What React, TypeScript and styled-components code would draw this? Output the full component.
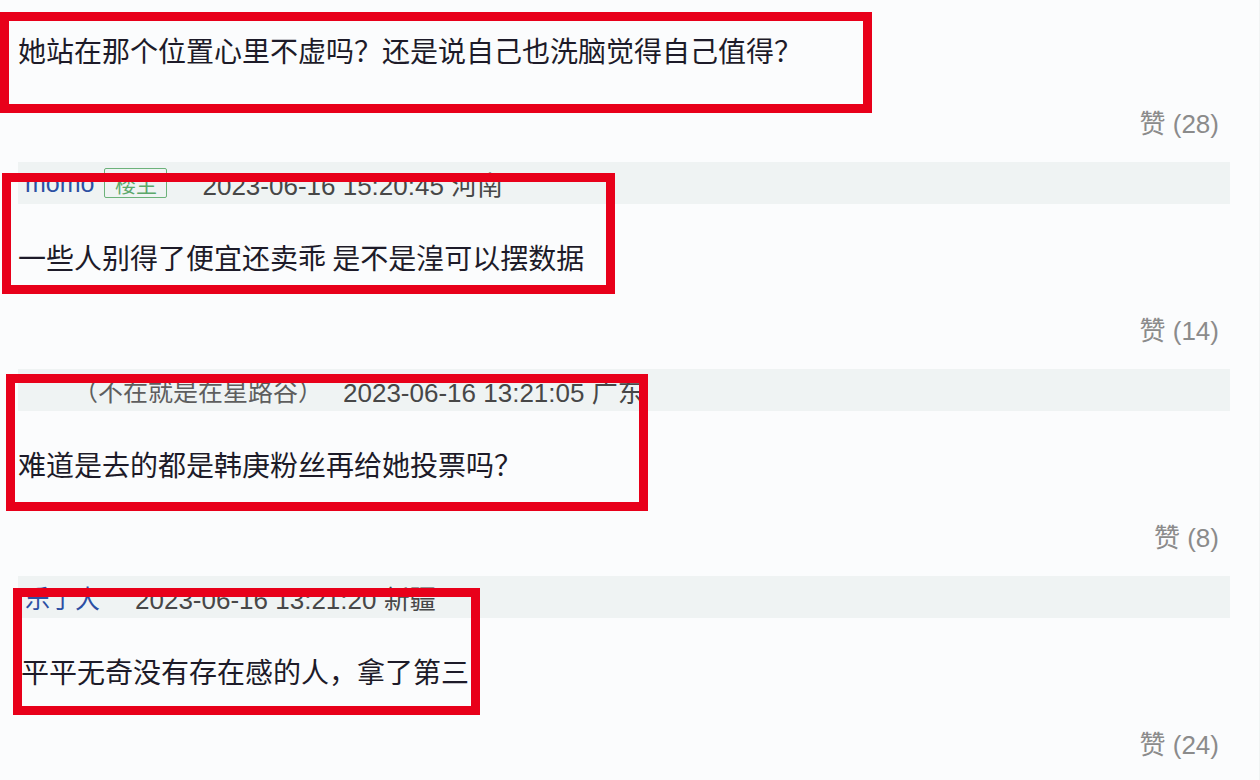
import React from 'react';
import styled, { createGlobalStyle } from 'styled-components';

type BoxRect = {
    top: number;
    left: number;
    width: number;
    height: number;
}

type CommentItem = {
    name?: string;
    host?: boolean;
    note?: string;
    time?: string;
    place?: string;
    text: string;
    likes: number;
    indent?: number;
    box: BoxRect;
}

const GlobalStyle = createGlobalStyle`
    html, body {
        margin: 0;
        padding: 0;
        background: #fbfcfd;
    }
    body {
        font-family: "Liberation Sans", "Noto Sans CJK SC", sans-serif;
        overflow: hidden;
    }
`

const Page = styled.div`
    width: 1260px;
    height: 780px;
    overflow: hidden;
    background: #fbfcfd;
    border-right: 1px solid #f1f4f4;
    box-sizing: border-box;
`

const CommentBlock = styled.div`
    position: relative;
    display: flex;
    flex-direction: column;
    margin-bottom: 23px;
`

const HeaderBar = styled.div`
    display: flex;
    align-items: center;
    height: 42px;
    margin: 0 29px 0 18px;
    padding-left: 7px;
    background-color: #eff3f3;
    font-size: 25px;
    white-space: nowrap;
`

const UserName = styled.span`
    color: #2c4fa3;
`

const HostBadge = styled.span`
    display: inline-flex;
    align-items: center;
    justify-content: center;
    width: 63px;
    height: 30px;
    margin-left: 10px;
    box-sizing: border-box;
    border: 1px solid #6cb27a;
    border-radius: 2px;
    color: #5ba86a;
    font-size: 21px;
`

const UserNote = styled.span<{ $indent: number }>`
    margin-left: ${({ $indent }) => $indent}px;
    color: #5e5e5e;
`

const MetaText = styled.span<{ $gap: number }>`
    margin-left: ${({ $gap }) => $gap}px;
    font-size: 26px;
    color: #474747;
`

const BodyText = styled.div<{ $first: boolean; $indent: number }>`
    padding: ${({ $first }) => ($first ? '35px' : '38px')} 0 0 ${({ $indent }) => $indent}px;
    font-size: 28px;
    line-height: 30px;
    color: #1d1b29;
    font-family: "Noto Sans CJK SC", "Liberation Sans", sans-serif;
    white-space: nowrap;
`

const LikeRow = styled.div`
    display: flex;
    justify-content: flex-end;
    margin-top: 44px;
    padding-right: 40px;
    font-size: 26px;
    line-height: 30px;
    color: #8b8b8b;
`

const HighlightBox = styled.div<{ $rect: BoxRect }>`
    position: absolute;
    top: ${({ $rect }) => $rect.top}px;
    left: ${({ $rect }) => $rect.left}px;
    width: ${({ $rect }) => $rect.width}px;
    height: ${({ $rect }) => $rect.height}px;
    box-sizing: border-box;
    border: 9px solid #e8001a;
    pointer-events: none;
`

const comments: CommentItem[] = [
    {
        text: '她站在那个位置心里不虚吗？还是说自己也洗脑觉得自己值得？',
        likes: 28,
        box: { top: 12, left: 0, width: 872, height: 101 },
    },
    {
        name: 'momo',
        host: true,
        time: '2023-06-16 15:20:45',
        place: '河南',
        text: '一些人别得了便宜还卖乖 是不是湟可以摆数据',
        likes: 14,
        box: { top: 11, left: 2, width: 613, height: 121 },
    },
    {
        note: '（不在就是在星路谷）',
        time: '2023-06-16 13:21:05',
        place: '广东',
        text: '难道是去的都是韩庚粉丝再给她投票吗？',
        likes: 8,
        box: { top: 5, left: 6, width: 642, height: 137 },
    },
    {
        name: '乐了大',
        time: '2023-06-16 13:21:20',
        place: '新疆',
        text: '平平无奇没有存在感的人，拿了第三',
        likes: 24,
        indent: 21,
        box: { top: 12, left: 13, width: 467, height: 127 },
    },
];

const Comment: React.FC<{ item: CommentItem; first: boolean }> = ({ item, first }) => {
    return (
        <CommentBlock>
            {!first && (
                <HeaderBar>
                    {item.name && <UserName>{item.name}</UserName>}
                    {item.host && <HostBadge>楼主</HostBadge>}
                    {item.note && <UserNote $indent={item.name ? 8 : 48}>{item.note}</UserNote>}
                    <MetaText $gap={item.note ? 20 : 35}>{`${item.time} ${item.place}`}</MetaText>
                </HeaderBar>
            )}
            <BodyText $first={first} $indent={item.indent ?? 18}>{item.text}</BodyText>
            <LikeRow>{`赞 (${item.likes})`}</LikeRow>
            <HighlightBox $rect={item.box} />
        </CommentBlock>
    )
}

const App: React.FC = () => {
    return (
        <>
            <GlobalStyle />
            <Page>
                {comments.map((c, i) => (
                    <Comment key={i} item={c} first={i === 0} />
                ))}
            </Page>
        </>
    )
}

export default App;
